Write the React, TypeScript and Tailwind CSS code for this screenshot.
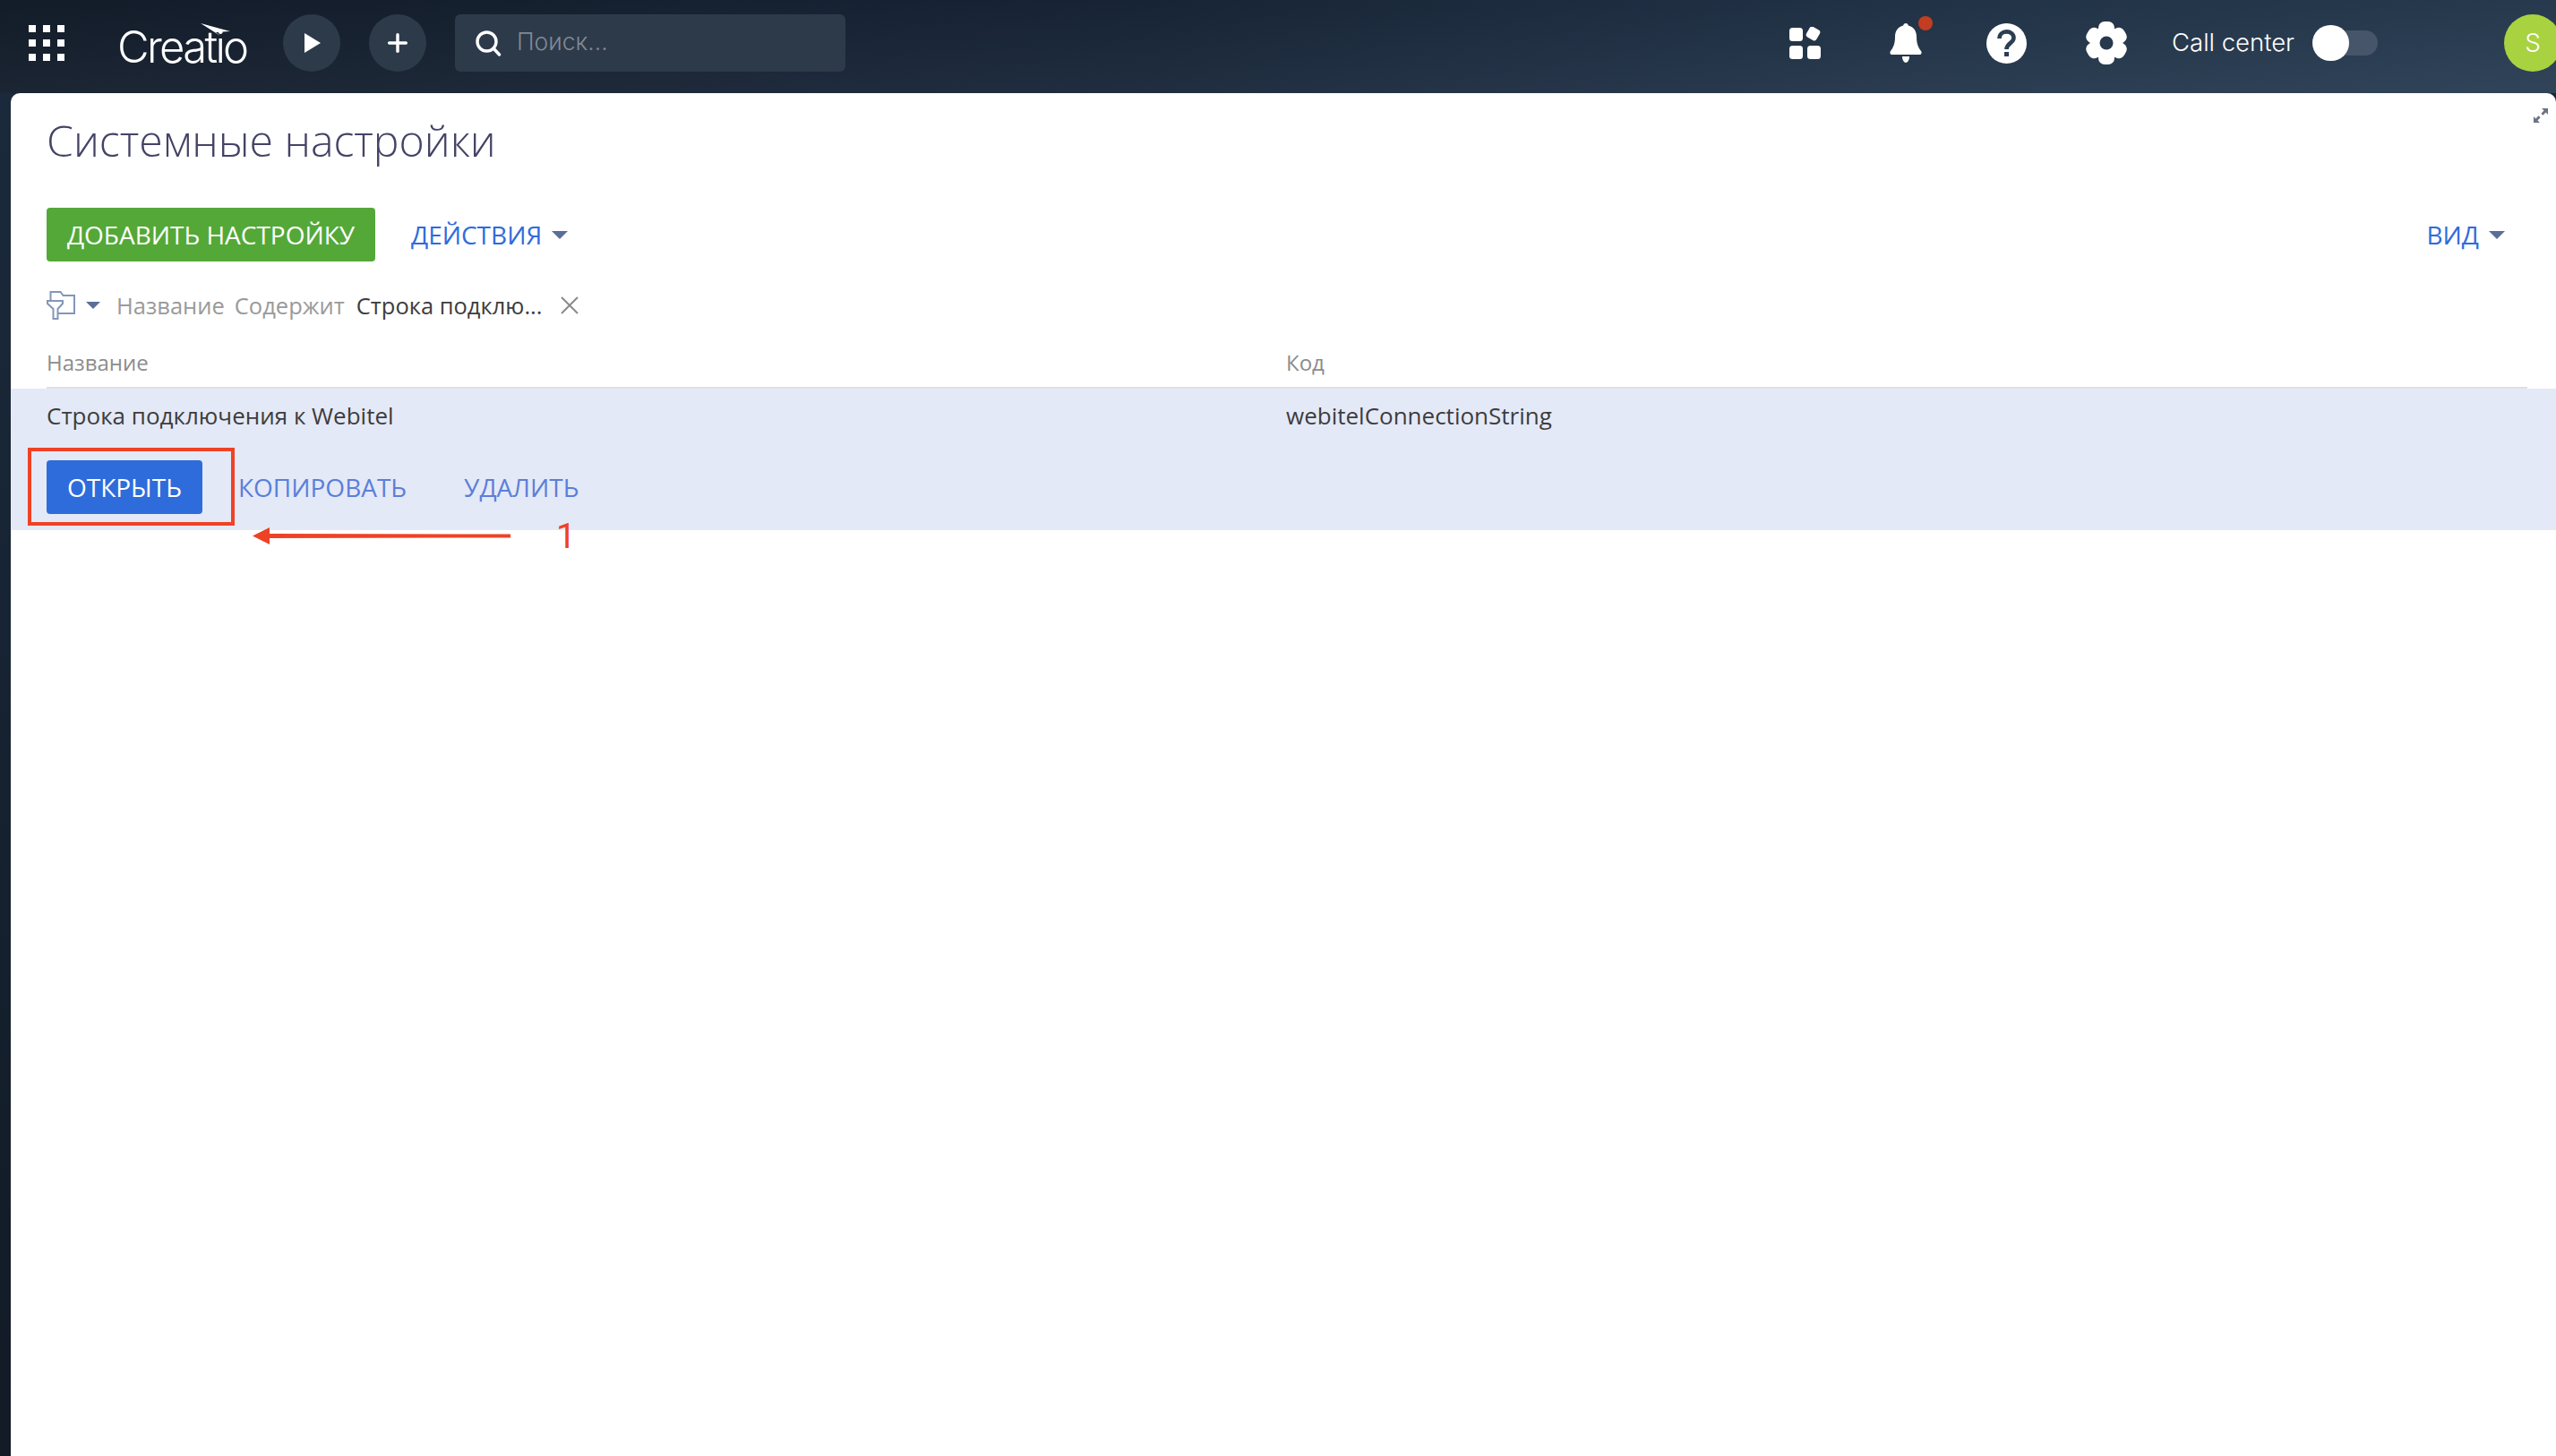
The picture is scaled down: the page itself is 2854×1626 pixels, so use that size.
import { Plus } from 'lucide-react'

const BAR_BG = '#2b3e52'

function Caret({ className }: { className?: string }) {
  return (
    <svg width="18" height="9" viewBox="0 0 18 9" className={className}>
      <polygon points="0,0 18,0 9,9" fill="#5a6e99" />
    </svg>
  )
}

function AppsGrid() {
  const dots = [0, 1, 2, 3, 4, 5, 6, 7, 8]
  return (
    <div className="mt-[12px] grid w-[40px] grid-cols-3 gap-[8px]">
      {dots.map((d) => (
        <span key={d} className="h-[8px] w-[8px] bg-white" />
      ))}
    </div>
  )
}

function Logo() {
  return (
    <div className="relative mt-[14px] ml-[59px] w-[145px] font-['Inter',sans-serif] text-[49px] leading-[46px] font-light tracking-[-2.700px] text-white">
      Creatio
      <svg width="34" height="14" viewBox="0 0 34 14" className="absolute top-[-4px] left-[93px]">
        <path d="M0 0 L33 9 L17 10 L22 14 Z" fill="#fff" />
      </svg>
    </div>
  )
}

function RoundBtn({ children, className }: { children: React.ReactNode; className?: string }) {
  return (
    <button className={`flex h-[64px] w-[64px] items-center justify-center rounded-full bg-[#2d3a4a] ${className ?? ''}`}>
      {children}
    </button>
  )
}

function SearchBox() {
  return (
    <div className="ml-[32px] flex h-[64px] w-[436px] items-center rounded-[6px] bg-[#2d3a4a] pl-[22px]">
      <svg width="30" height="30" viewBox="0 0 30 30" fill="none" stroke="#fff" strokeWidth="3.4">
        <circle cx="13.5" cy="13.5" r="10.5" />
        <path d="M21 21l6.5 7" strokeLinecap="round" />
      </svg>
      <span className="mt-[-2px] ml-[17px] font-['Inter',sans-serif] text-[26.500px] font-light text-[#808995]">Поиск...</span>
    </div>
  )
}

function WidgetsIcon() {
  return (
    <svg width="36" height="36" viewBox="0 0 36 36" fill="#fff">
      <rect x="0" y="1" width="15" height="15" rx="3.5" />
      <rect x="0" y="21" width="15" height="15" rx="3.5" />
      <rect x="20" y="21" width="15" height="15" rx="3.5" />
      <rect x="20" y="1" width="13" height="13" rx="3" transform="rotate(30 26.5 7.5)" />
    </svg>
  )
}

function BellIcon() {
  return (
    <div className="relative h-[44px] w-[36px]">
      <svg width="36" height="44" viewBox="0 0 36 44" fill="#fff">
        <path d="M18 0c1.6 0 2.6 1 2.8 2.6C27 4 30 9 30 15c0 8 2 12 5 16 1 1.4.8 4-1.5 4H2.5C.2 35 0 32.4 1 31c3-4 5-8 5-16 0-6 3-11 9.2-12.4C15.4 1 16.4 0 18 0Z" />
        <path d="M14 37h8c0 4-2 7-4 7s-4-3-4-7Z" />
      </svg>
      <span className="absolute top-[-8px] left-[32px] h-[16px] w-[16px] rounded-full bg-[#c33e20]" />
    </div>
  )
}

function HelpIcon() {
  return (
    <svg width="45" height="45" viewBox="0 0 45 45">
      <circle cx="22.5" cy="22.5" r="22.5" fill="#fff" />
      <path d="M14.5 17c0-4.6 3.6-7.6 8-7.6s8 2.8 8 6.8c0 6-8 6-8 12.8" fill="none" stroke={BAR_BG} strokeWidth="4.6" />
      <rect x="20" y="32" width="5" height="5" fill={BAR_BG} />
    </svg>
  )
}

function GearIcon() {
  return (
    <svg width="46" height="48" viewBox="0 0 46 48">
      <defs>
        <mask id="gear-hole">
          <rect width="46" height="48" fill="#fff" />
          <circle cx="23" cy="24" r="7.5" fill="#000" />
        </mask>
      </defs>
      <g fill="#fff" mask="url(#gear-hole)">
        <circle cx="23" cy="24" r="18" />
        <rect x="14" y="0" width="18" height="48" rx="7" />
        <rect x="14" y="0" width="18" height="48" rx="7" transform="rotate(60 23 24)" />
        <rect x="14" y="0" width="18" height="48" rx="7" transform="rotate(120 23 24)" />
      </g>
    </svg>
  )
}

function FilterIcon() {
  return (
    <svg width="32" height="32" viewBox="0 0 32 32" fill="none" stroke="#8496b8" strokeWidth="2">
      <path d="M4.5 10V1h11l3 4H31v20H12" />
      <path d="M1 11h17v3l-5.5 6v11h-5V20L1 14Z" />
    </svg>
  )
}

function ExpandIcon() {
  return (
    <svg width="18" height="18" viewBox="0 0 18 18" fill="#6b7280">
      <path d="M10 1h7v7l-2.400-2.400-3.200 3.200-2-2 3.200-3.200Z" />
      <path d="M1 17v-7l2.400 2.400 3.200-3.200 2 2-3.200 3.200L8 17Z" />
    </svg>
  )
}

function TopBar() {
  return (
    <header className="flex h-[104px] shrink-0 items-start pt-[16px] pl-[32px]">
      <AppsGrid />
      <Logo />
      <RoundBtn className="ml-[40px]">
        <svg width="20" height="24" viewBox="0 0 20 24" className="ml-[2px]">
          <polygon points="1,1 19,12 1,23" fill="#fff" />
        </svg>
      </RoundBtn>
      <RoundBtn className="ml-[32px]">
        <Plus size={32} color="#fff" strokeWidth={2.6} />
      </RoundBtn>
      <SearchBox />
      <div className="ml-auto flex h-[64px] items-center">
        <WidgetsIcon />
        <div className="ml-[76px]"><BellIcon /></div>
        <div className="ml-[72px]"><HelpIcon /></div>
        <div className="ml-[66px]"><GearIcon /></div>
        <span className="ml-[50px] font-['Inter',sans-serif] text-[27.500px] font-light text-white">Call center</span>
        <div className="relative ml-[20px] h-[28px] w-[73px] rounded-full bg-[#465569]">
          <span className="absolute top-[-6px] left-0 h-[40px] w-[41px] rounded-full bg-white" />
        </div>
        <div className="mr-[-6px] ml-[141px] flex h-[64px] w-[64px] items-center justify-center rounded-full bg-[#a8d240] font-['Inter',sans-serif] text-[28px] font-light text-white">
          S
        </div>
      </div>
    </header>
  )
}

function Toolbar() {
  return (
    <div className="mt-[44px] flex items-center px-[40px]">
      <button className="flex h-[60px] w-[367px] items-center justify-center rounded-[4px] bg-[#53a838] text-[28px] text-white">
        ДОБАВИТЬ НАСТРОЙКУ
      </button>
      <button className="ml-[40px] flex items-center text-[28px] text-[#2f6bdc]">
        ДЕЙСТВИЯ
        <Caret className="ml-[11px]" />
      </button>
      <button className="mr-[17px] ml-auto flex items-center text-[28px] text-[#2f6bdc]">
        ВИД
        <Caret className="ml-[11px]" />
      </button>
    </div>
  )
}

function FilterRow() {
  return (
    <div className="mt-[30px] flex h-[38px] items-center px-[40px] text-[25.500px]">
      <FilterIcon />
      <Caret className="ml-[12px] h-[8px] w-[16px]" />
      <span className="ml-[18px] text-[#9a9a9a]">Название</span>
      <span className="ml-[11px] text-[#9a9a9a]">Содержит</span>
      <span className="ml-[13px] text-[#3d3d3d]">Строка подклю...</span>
      <svg width="20" height="20" viewBox="0 0 20 20" stroke="#8a8a8a" strokeWidth="2" className="ml-[20px]">
        <path d="M1 1l18 18M19 1L1 19" />
      </svg>
    </div>
  )
}

function SettingsGrid() {
  return (
    <div className="mt-[26px] flex flex-col">
      <div className="mr-[32px] ml-[40px] flex h-[48px] border-b-[2px] border-[#e0e0e0] pt-[1px] text-[24px] text-[#8c8c8c]">
        <span className="w-[1384px]">Название</span>
        <span>Код</span>
      </div>
      <div className="flex h-[158px] flex-col bg-[#e4e9f7] pl-[40px]">
        <div className="mt-[12px] flex h-[36px] items-center text-[26px] text-[#3d3d3d]">
          <span className="w-[1384px]">Строка подключения к Webitel</span>
          <span>webitelConnectionString</span>
        </div>
        <div className="mt-[32px] flex items-center">
          <button className="h-[60px] w-[174px] rounded-[4px] bg-[#2e6cdb] text-[28px] text-white">ОТКРЫТЬ</button>
          <button className="ml-[40px] text-[28px] text-[#5b7fd9]">КОПИРОВАТЬ</button>
          <button className="ml-[64px] text-[28px] text-[#5b7fd9]">УДАЛИТЬ</button>
        </div>
      </div>
    </div>
  )
}

function Annotations() {
  return (
    <>
      <div className="absolute top-[396px] left-[19px] h-[87px] w-[231px] border-[4px] border-[#ee4226]" />
      <svg width="290" height="20" viewBox="0 0 290 20" className="absolute top-[485px] left-[270px]">
        <polygon points="0,9.500 19,0 19,7 288,7.500 288,11.500 19,12 19,19" fill="#ee4226" />
      </svg>
      <span className="absolute top-[473px] left-[609px] font-['Roboto',sans-serif] text-[39px] leading-[44px] text-[#ee4226]">
        1
      </span>
    </>
  )
}

export default function App() {
  return (
    <div className="flex h-[1626px] w-[2854px] flex-col overflow-hidden bg-[linear-gradient(175deg,#141e2c_0%,#1b2a3c_3%,#101822_100%)]">
      <div className="bg-[linear-gradient(180deg,rgba(0,0,0,0.08),rgba(255,255,255,0.03)),linear-gradient(90deg,#141e2c,#19273a_45%,#24364b_75%,#2a3e54)]">
        <TopBar />
      </div>
      <main className="relative ml-[12px] flex flex-1 flex-col rounded-t-[10px] bg-white font-['Open_Sans',sans-serif]">
        <h1 className="mt-[20px] pl-[40px] text-[48.200px] leading-[64px] font-light text-[#444366]">Системные настройки</h1>
        <div className="absolute top-[16px] right-[8px]">
          <ExpandIcon />
        </div>
        <Toolbar />
        <FilterRow />
        <SettingsGrid />
        <Annotations />
      </main>
    </div>
  )
}
